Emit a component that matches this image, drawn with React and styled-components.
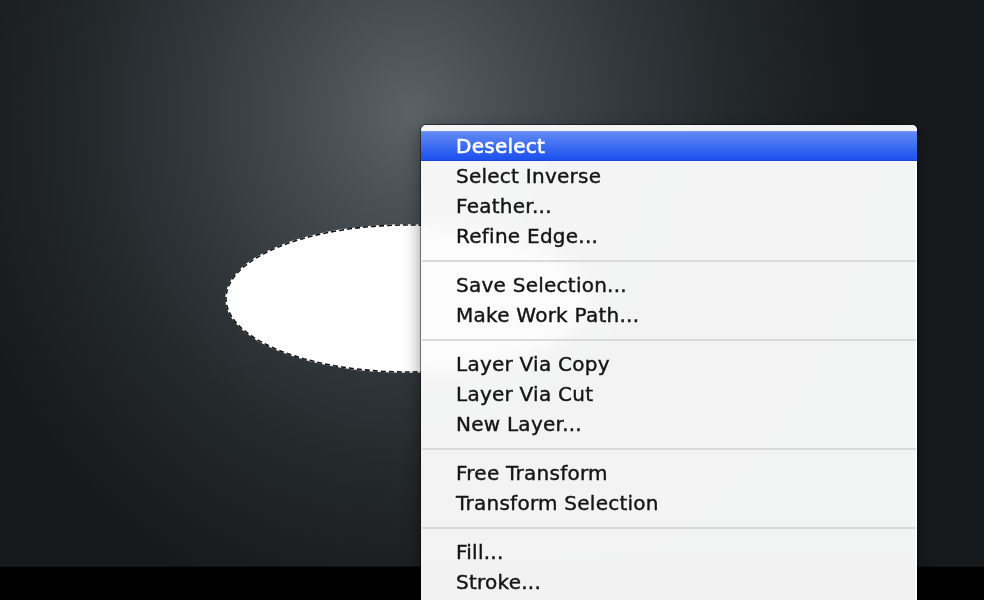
import React from "react";
import styled, { createGlobalStyle } from "styled-components";

const GlobalStyle = createGlobalStyle`
  html, body {
    margin: 0;
    padding: 0;
    background: #000;
    overflow: hidden;
  }
  * { box-sizing: border-box; }
`;

const Screen = styled.div`
  position: relative;
  width: 984px;
  height: 600px;
  overflow: hidden;
  display: flex;
  flex-direction: column;
  font-family: "DejaVu Sans", "Liberation Sans", sans-serif;
`;

const Canvas = styled.div`
  position: relative;
  height: 567px;
  flex: none;
  background:
    radial-gradient(
      ellipse 470px 520px at 410px 115px,
      #5a6266 0%,
      #464d52 22%,
      #33393d 45%,
      #24292c 68%,
      #1b1f22 88%,
      #171a1c 100%
    );
  border-bottom: 1px solid #111315;
`;

const BottomBar = styled.div`
  flex: 1;
  background: #000;
`;

const Selection = styled.svg`
  position: absolute;
  left: 222px;
  top: 221px;
  overflow: visible;
`;

const Menu = styled.div`
  position: absolute;
  left: 421px;
  top: 125px;
  width: 496px;
  padding-top: 6px;
  padding-bottom: 8px;
  border-radius: 5px 5px 0 0;
  background: rgba(252, 252, 252, 0.962);
  backdrop-filter: blur(9px);
  box-shadow: 0 0 0 1px rgba(0, 0, 0, 0.45), inset -2px 0 0 rgba(255, 255, 255, 0.9),
    0 6px 18px rgba(0, 0, 0, 0.45);
`;

const Item = styled.div`
  height: 30px;
  line-height: 30px;
  padding-left: 35px;
  font-size: 20px;
  letter-spacing: 0.25px;
  white-space: nowrap;
  color: ${(p) => (p.$active ? "#ffffff" : "#141414")};
  -webkit-text-stroke: ${(p) => (p.$active ? "0.6px #ffffff" : "0.4px #141414")};
  background: ${(p) =>
    p.$active
      ? "linear-gradient(180deg, #7a9df6 0%, #5f87f4 6%, #4270f2 45%, #2759f0 80%, #1b4fee 100%)"
      : "transparent"};
  box-shadow: ${(p) => (p.$active ? "inset 0 -1px 0 #1846d8" : "none")};
`;

const Separator = styled.div`
  height: 19px;
  display: flex;
  align-items: center;
  padding: 0 1px;

  &::after {
    content: "";
    flex: 1;
    height: 2px;
    background: #dadada;
  }
`;

const groups = [
  ["Deselect", "Select Inverse", "Feather...", "Refine Edge..."],
  ["Save Selection...", "Make Work Path..."],
  ["Layer Via Copy", "Layer Via Cut", "New Layer..."],
  ["Free Transform", "Transform Selection"],
  ["Fill...", "Stroke..."],
];

export default function App() {
  return (
    <>
      <GlobalStyle />
      <Screen>
        <Canvas>
          <Selection width="372" height="156" viewBox="0 0 372 156">
            <ellipse cx="186" cy="77.5" rx="182" ry="73.5" fill="#ffffff" stroke="#ffffff" strokeWidth="1.6" />
            <ellipse
              cx="186"
              cy="77.5"
              rx="182"
              ry="73.5"
              fill="none"
              stroke="#111"
              strokeWidth="1.6"
              strokeDasharray="5 3"
            />
          </Selection>
          <Menu>
            {groups.map((g, gi) => (
              <React.Fragment key={gi}>
                {gi > 0 && <Separator />}
                {g.map((label) => (
                  <Item key={label} $active={label === "Deselect"}>
                    {label}
                  </Item>
                ))}
              </React.Fragment>
            ))}
          </Menu>
        </Canvas>
        <BottomBar />
      </Screen>
    </>
  );
}
